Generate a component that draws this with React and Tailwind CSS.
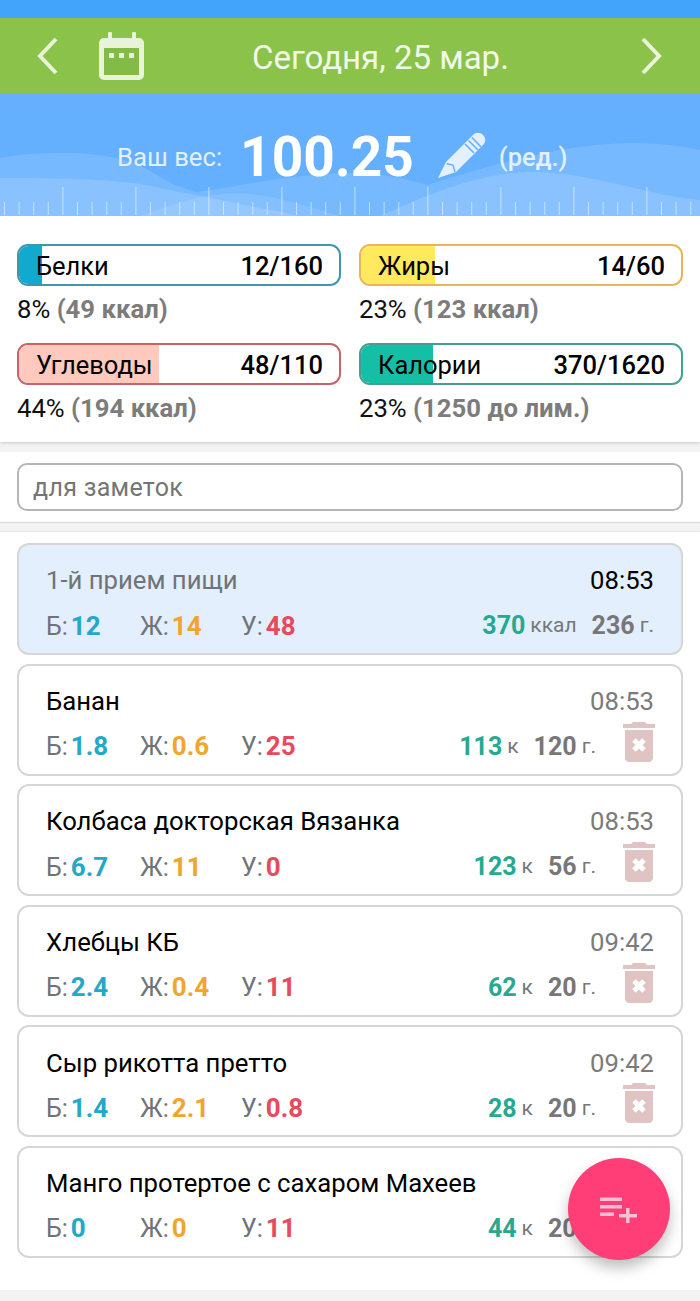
import React from 'react'

const bars = [
  { name: 'Белки', value: '12/160', pct: '8%', note: '(49 ккал)', border: 'border-[#3f97ad]', fill: 'bg-[#12a9cf]', width: 'w-[23px]' },
  { name: 'Жиры', value: '14/60', pct: '23%', note: '(123 ккал)', border: 'border-[#e8b45c]', fill: 'bg-[#ffe95c]', width: 'w-[74px]' },
  { name: 'Углеводы', value: '48/110', pct: '44%', note: '(194 ккал)', border: 'border-[#c9636b]', fill: 'bg-[#ffc9bd]', width: 'w-[140px]' },
  { name: 'Калории', value: '370/1620', pct: '23%', note: '(1250 до лим.)', border: 'border-[#45a08f]', fill: 'bg-[#14bfa6]', width: 'w-[72px]' },
]

const foods = [
  { name: 'Банан', time: '08:53', b: '1.8', f: '0.6', c: '25', kcal: '113', g: '120' },
  { name: 'Колбаса докторская Вязанка', time: '08:53', b: '6.7', f: '11', c: '0', kcal: '123', g: '56' },
  { name: 'Хлебцы КБ', time: '09:42', b: '2.4', f: '0.4', c: '11', kcal: '62', g: '20' },
  { name: 'Сыр рикотта претто', time: '09:42', b: '1.4', f: '2.1', c: '0.8', kcal: '28', g: '20' },
  { name: 'Манго протертое с сахаром Махеев', time: '09:42', b: '0', f: '0', c: '11', kcal: '44', g: '20' },
]

function Waves() {
  const ticks = []
  for (let i = 0; i < 48; i++) ticks.push(4 + i * 14.6)
  return (
    <svg className="absolute inset-0" width="700" height="122" viewBox="0 0 700 122">
      <path d="M0 64 C20 60 40 59 60 59 C100 59 130 64 155 80 C170 90 185 95 197 98 C240 92 290 80 350 79 C380 79 405 84 427 91 C480 75 560 49 633 49 C660 49 680 52 700 56 L700 122 L0 122 Z" fill="#fff" fillOpacity="0.12" />
      <path d="M0 84 C50 84 110 84 150 92 C200 102 250 112 300 122 L0 122 Z" fill="#fff" fillOpacity="0.14" />
      <path d="M140 122 C170 112 190 104 220 100 C260 96 300 110 340 122 Z" fill="#fff" fillOpacity="0.1" />
      <path d="M380 122 C430 100 480 78 533 78 C590 78 640 100 700 106 L700 122 Z" fill="#fff" fillOpacity="0.14" />
      {ticks.map((x, i) => (
        i % 5 === 4
          ? <rect key={x} x={x} y="93" width="1" height="28" fill="#fff" fillOpacity="0.55" />
          : <rect key={x} x={x} y="108" width="1" height="13" fill="#fff" fillOpacity="0.5" />
      ))}
    </svg>
  )
}

function Chevron({ flip }) {
  return (
    <svg width="22" height="38" viewBox="0 0 22 38" className="block">
      <path d={flip ? 'M3 2 L19 19 L3 36' : 'M19 2 L3 19 L19 36'} fill="none" stroke="#e8f3da" strokeWidth="4" />
    </svg>
  )
}

function CalendarIcon() {
  return (
    <svg width="45" height="48" viewBox="0 0 45 48" className="block">
      <rect x="9" y="0" width="4" height="8" rx="1" fill="#e8f3da" />
      <rect x="33" y="0" width="4" height="8" rx="1" fill="#e8f3da" />
      <rect x="0" y="6" width="45" height="42" rx="5" fill="#e8f3da" />
      <rect x="5" y="16" width="35" height="27" fill="#82bb45" />
      <rect x="10" y="21" width="5" height="5" fill="#e8f3da" />
      <rect x="20" y="21" width="5" height="5" fill="#e8f3da" />
      <rect x="30" y="21" width="5" height="5" fill="#e8f3da" />
    </svg>
  )
}

function PencilIcon() {
  return (
    <svg width="48" height="47" viewBox="0 0 48 47" className="block">
      <path d="M0 46 L8 30 L35 3 C38 0 42 0 45 3 C48 6 48 10 45 13 L18 40 Z" fill="#e3f0ff" />
      <path d="M8.7 31.7 L15 33 L17 40" fill="none" stroke="#64b0ff" strokeWidth="1.4" />
      <path d="M27 12 L36 21 M30.5 8.5 L40 18 M34 5.5 L43 15" stroke="#64b0ff" strokeWidth="1.6" />
    </svg>
  )
}

function TrashIcon() {
  return (
    <svg width="32" height="40" viewBox="0 0 32 40" className="block">
      <path d="M10 0 H22 L24 2 H32 V6 H0 V2 H8 Z" fill="#e0c4c4" />
      <path d="M2 8 H30 V36 C30 38 28 40 26 40 H6 C4 40 2 38 2 36 Z" fill="#e0c4c4" />
      <path d="M11 18 L21 28 M21 18 L11 28" stroke="#fff" strokeWidth="5" />
    </svg>
  )
}

function PlaylistAdd() {
  return (
    <svg width="38" height="27" viewBox="0 0 38 27" className="block">
      <rect x="0" y="0.5" width="22" height="3.5" fill="#ffc0d6" />
      <rect x="0" y="8" width="22" height="3.5" fill="#ffc0d6" />
      <rect x="0" y="15.5" width="14" height="3.5" fill="#ffc0d6" />
      <rect x="19" y="17" width="18" height="3.5" fill="#ffc0d6" />
      <rect x="26" y="11" width="3.5" height="15" fill="#ffc0d6" />
    </svg>
  )
}

function Bar({ bar }) {
  return (
    <div>
      <div className={`relative h-[42px] rounded-[11px] border-2 bg-white overflow-hidden ${bar.border}`}>
        <div className={`absolute left-0 top-0 bottom-0 ${bar.width} ${bar.fill}`} />
        <div className="relative h-full flex items-center justify-between pl-[17px] pr-[16px] pt-[2px] text-[25.5px] text-black">
          <span>{bar.name}</span>
          <span className="font-medium">{bar.value}</span>
        </div>
      </div>
      <div className="mt-[7px] h-[32px] leading-[32px] text-[25.7px] text-[#111]">
        {bar.pct} <span className="font-bold text-[#7c7c7c]">{bar.note}</span>
      </div>
    </div>
  )
}

function Macro({ label, value, color, width }) {
  return (
    <div className={`flex items-baseline ${width}`}>
      <span>{label}</span>
      <span className={`ml-[3px] font-bold text-[26px] ${color}`}>{value}</span>
    </div>
  )
}

function Macros({ b, f, c }) {
  return (
    <div className="flex text-[25px] text-[#6f7478]">
      <Macro label="Б:" value={b} color="text-[#22a9c9]" width="w-[94px]" />
      <Macro label="Ж:" value={f} color="text-[#f0a52c]" width="w-[101px]" />
      <Macro label="У:" value={c} color="text-[#e8495c]" />
    </div>
  )
}

function FoodRow({ food }) {
  return (
    <div className="h-[112px] rounded-[12px] border-2 border-[#d6d6d6] bg-white px-[27px]">
      <div className="flex justify-between items-center h-[71px] mb-[1px]">
        <span className="text-[25.7px] text-black">{food.name}</span>
        <span className="text-[25.7px] text-[#7b7b7b]">{food.time}</span>
      </div>
      <div className="flex justify-between items-center h-[18px]">
        <Macros b={food.b} f={food.f} c={food.c} />
        <div className="flex items-center text-[#777]">
          <span className="font-bold text-[25px] text-[#26a98f]">{food.kcal}</span>
          <span className="text-[21px] ml-[5px]">к</span>
          <span className="font-bold text-[25px] ml-[15px]">{food.g}</span>
          <span className="text-[21px] ml-[5px]">г.</span>
          <div className="w-[58px] flex justify-end">
            <div className="-mt-[10px] -mr-[1px]"><TrashIcon /></div>
          </div>
        </div>
      </div>
    </div>
  )
}

export default function App() {
  return (
    <div className="relative w-[700px] h-[1301px] overflow-hidden bg-[#f3f3f3] font-['Roboto',sans-serif]">
      <div className="h-[18px] bg-[#42a5fb]" />

      <div className="h-[76px] bg-[#8bc34a] flex items-center text-[#f1f8e9] pl-[37px] pr-[38px]">
        <Chevron />
        <div className="ml-[40px]"><CalendarIcon /></div>
        <div className="ml-[108px] pt-[3px] flex-1 text-[33px]">Сегодня, 25 мар.</div>
        <Chevron flip />
      </div>

      <div className="relative h-[122px] bg-[#64b0ff] overflow-hidden">
        <Waves />
        <div className="relative flex items-center h-[122px] pt-[4px] pl-[117px] text-white">
          <span className="text-[25.7px] text-[#e3f0ff]">Ваш вес:</span>
          <span className="ml-[18px] text-[55px] font-bold">100.25</span>
          <div className="ml-[24px] -mt-[3px]"><PencilIcon /></div>
          <span className="ml-[13px] text-[25.5px] font-medium text-[#e3f0ff]">(ред.)</span>
        </div>
      </div>

      <div className="h-[226px] bg-white shadow-[0_1px_3px_rgba(0,0,0,0.18)] px-[17px] pt-[28px]">
        <div className="grid grid-cols-2 gap-x-[18px] gap-y-[18px]">
          {bars.map((bar) => <Bar key={bar.name} bar={bar} />)}
        </div>
      </div>

      <div className="mt-[10px] h-[70px] bg-white shadow-[0_1px_1px_rgba(0,0,0,0.1)] px-[17px] pt-[11px]">
        <div className="h-[48px] rounded-[10px] border-2 border-[#b5b5b5] flex items-center pl-[14px] pt-[2px] text-[25px] tracking-[0.3px] text-[#757575]">
          для заметок
        </div>
      </div>

      <div className="mt-[10px] h-[740px] bg-white shadow-[0_1px_3px_rgba(0,0,0,0.25)] px-[17px] pt-[11px]">
        <div className="flex flex-col gap-[8.6px]">
          <div className="h-[112px] rounded-[12px] border-2 border-[#d6d6d6] bg-[#e3effc] px-[27px]">
            <div className="flex justify-between items-center h-[71px] mb-[1px]">
              <span className="text-[25.7px] text-[#6f7478]">1-й прием пищи</span>
              <span className="text-[25.7px] text-black">08:53</span>
            </div>
            <div className="flex justify-between items-center h-[18px]">
              <Macros b="12" f="14" c="48" />
              <div className="flex items-center text-[#777]">
                <span className="font-bold text-[25px] text-[#26a98f]">370</span>
                <span className="text-[21px] ml-[5px]">ккал</span>
                <span className="font-bold text-[25px] ml-[15px]">236</span>
                <span className="text-[21px] ml-[5px]">г.</span>
              </div>
            </div>
          </div>
          {foods.map((food) => <FoodRow key={food.name} food={food} />)}
        </div>
      </div>

      <div className="h-[18px] bg-white" />

      <button className="absolute left-[568px] top-[1158px] w-[102px] h-[102px] rounded-full bg-[#ff3d77] shadow-[0_8px_14px_rgba(0,0,0,0.25)] flex items-center justify-center pt-[2px]">
        <PlaylistAdd />
      </button>
    </div>
  )
}
